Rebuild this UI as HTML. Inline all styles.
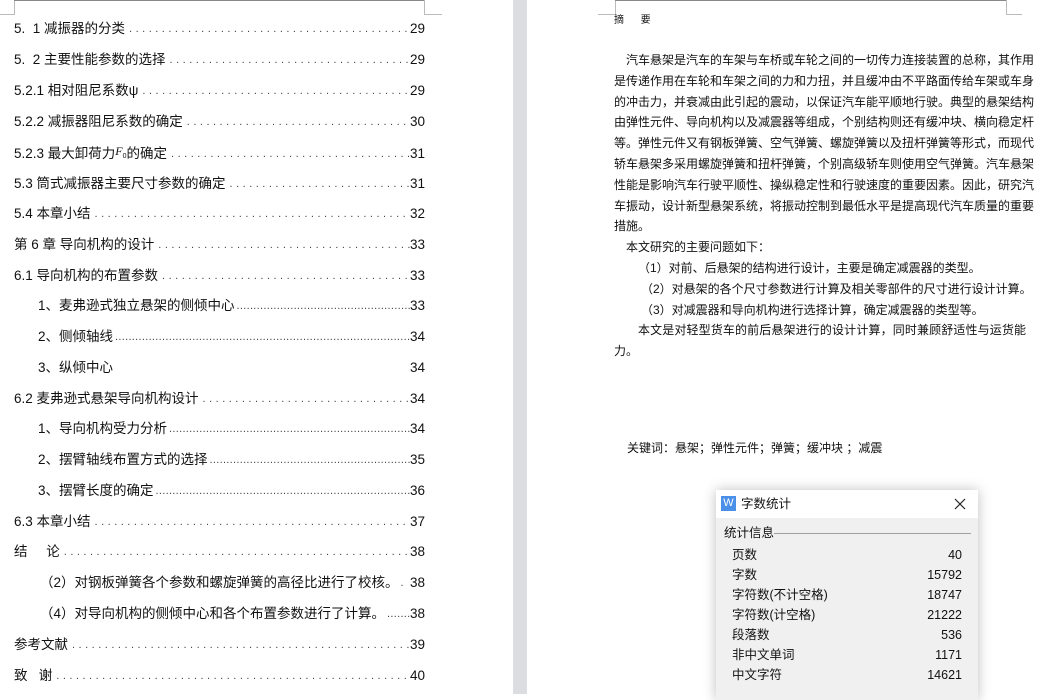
<!DOCTYPE html>
<html><head><meta charset="utf-8"><style>
*{margin:0;padding:0;box-sizing:border-box}
body{width:1042px;height:694px;overflow:hidden;background:#fff;position:relative;font-family:"Liberation Sans","Noto Sans CJK SC",sans-serif;color:#111}
.gap{position:absolute;left:513px;top:0;width:14px;height:694px;background:#dcdde0}
.ln{position:absolute;background:#bbb}
.row{position:absolute;left:14px;width:411px;height:18px;display:flex;font-size:13.5px;line-height:18px;white-space:nowrap}
.row .d{flex:1;overflow:hidden;color:#444;letter-spacing:3.5px;padding:0 4px;font-size:11px}
.row.s{font-size:13.5px}
.row.s .d{letter-spacing:0.3px;padding:0 2px}
.rt{position:absolute;left:614px;width:412px;font-size:12px;line-height:20.8px;font-family:"Liberation Sans","Noto Sans CJK SC",sans-serif}
.rt div{white-space:nowrap}
.rt .j{text-align:justify;text-align-last:justify;text-justify:inter-character}
.dlg{position:absolute;left:716px;top:490px;width:262px;height:210px;background:#f0f0f0;box-shadow:0 0 12px rgba(0,0,0,0.25);font-family:"Liberation Sans","Noto Sans CJK SC",sans-serif;font-size:12.5px}
.dlg .tb{height:28px;background:#fff;position:relative}
.it{position:absolute;left:16px;width:230px;display:flex;justify-content:space-between;height:18px;line-height:18px}
</style></head><body>
<div class="gap"></div>
<div class="ln" style="left:14px;top:0;width:1px;height:15px"></div>
<div class="ln" style="left:0;top:14px;width:15px;height:1px"></div>
<div class="ln" style="left:14px;top:0;width:411px;height:1px;background:#888"></div>
<div class="ln" style="left:424px;top:0;width:1px;height:15px"></div>
<div class="ln" style="left:424px;top:14px;width:18px;height:1px"></div>
<div class="ln" style="left:615px;top:0;width:1px;height:15px"></div>
<div class="ln" style="left:598px;top:14px;width:18px;height:1px"></div>
<div class="ln" style="left:615px;top:0;width:392px;height:1px;background:#888"></div>
<div class="ln" style="left:1006px;top:0;width:1px;height:15px"></div>
<div class="ln" style="left:1006px;top:14px;width:16px;height:1px"></div>

<div class="row" style="top:20px"><span>5.&nbsp;&nbsp;1 减振器的分类</span><span class="d">............................................................</span><span>29</span></div>
<div class="row" style="top:51px"><span>5.&nbsp;&nbsp;2 主要性能参数的选择</span><span class="d">............................................................</span><span>29</span></div>
<div class="row" style="top:82px"><span>5.2.1 相对阻尼系数ψ</span><span class="d">............................................................</span><span>29</span></div>
<div class="row" style="top:113px"><span>5.2.2 减振器阻尼系数的确定</span><span class="d">............................................................</span><span>30</span></div>
<div class="row" style="top:145px"><span>5.2.3 最大卸荷力<i style="font-family:'Liberation Serif',serif;font-size:12px;position:relative;top:-3px">F</i><span style="font-size:7px">0</span>的确定</span><span class="d">............................................................</span><span>31</span></div>
<div class="row" style="top:175px"><span>5.3 筒式减振器主要尺寸参数的确定</span><span class="d">............................................................</span><span>31</span></div>
<div class="row" style="top:205px"><span>5.4 本章小结</span><span class="d">............................................................</span><span>32</span></div>
<div class="row" style="top:236px"><span>第 6 章 导向机构的设计</span><span class="d">............................................................</span><span>33</span></div>
<div class="row" style="top:267px"><span>6.1 导向机构的布置参数</span><span class="d">............................................................</span><span>33</span></div>
<div class="row s" style="top:297px"><span style="padding-left:24px">1、麦弗逊式独立悬架的侧倾中心</span><span class="d">..............................................................................................................</span><span>33</span></div>
<div class="row s" style="top:328px"><span style="padding-left:24px">2、侧倾轴线</span><span class="d">..............................................................................................................................</span><span>34</span></div>
<div class="row s" style="top:359px"><span style="padding-left:24px">3、纵倾中心</span><span class="d" style="color:#fff">.</span><span>34</span></div>
<div class="row" style="top:390px"><span>6.2 麦弗逊式悬架导向机构设计</span><span class="d">............................................................</span><span>34</span></div>
<div class="row s" style="top:420px"><span style="padding-left:24px">1、导向机构受力分析</span><span class="d">..............................................................................................................................</span><span>34</span></div>
<div class="row s" style="top:451px"><span style="padding-left:24px">2、摆臂轴线布置方式的选择</span><span class="d">..............................................................................................................................</span><span>35</span></div>
<div class="row s" style="top:482px"><span style="padding-left:24px">3、摆臂长度的确定</span><span class="d">..............................................................................................................................</span><span>36</span></div>
<div class="row" style="top:513px"><span>6.3 本章小结</span><span class="d">............................................................</span><span>37</span></div>
<div class="row" style="top:543px"><span>结&nbsp;&nbsp;&nbsp;&nbsp;&nbsp;论</span><span class="d">............................................................</span><span>38</span></div>
<div class="row s" style="top:574px"><span style="padding-left:26px">（2）对钢板弹簧各个参数和螺旋弹簧的高径比进行了校核。</span><span class="d">.</span><span>38</span></div>
<div class="row s" style="top:605px"><span style="padding-left:26px">（4）对导向机构的侧倾中心和各个布置参数进行了计算。</span><span class="d">..........</span><span>38</span></div>
<div class="row" style="top:636px"><span>参考文献</span><span class="d">............................................................</span><span>39</span></div>
<div class="row" style="top:667px"><span>致&nbsp;&nbsp;&nbsp;谢</span><span class="d">............................................................</span><span>40</span></div>

<div style="position:absolute;left:614px;top:14px;font-size:10px;line-height:14px">摘&nbsp;&nbsp;&nbsp;&nbsp;&nbsp;&nbsp;要</div>
<div class="rt" style="top:50px">
<div class="j" style="padding-left:12px">汽车悬架是汽车的车架与车桥或车轮之间的一切传力连接装置的总称，其作用</div>
<div class="j">是传递作用在车轮和车架之间的力和力扭，并且缓冲由不平路面传给车架或车身</div>
<div class="j">的冲击力，并衰减由此引起的震动，以保证汽车能平顺地行驶。典型的悬架结构</div>
<div class="j">由弹性元件、导向机构以及减震器等组成，个别结构则还有缓冲块、横向稳定杆</div>
<div class="j">等。弹性元件又有钢板弹簧、空气弹簧、螺旋弹簧以及扭杆弹簧等形式，而现代</div>
<div class="j">轿车悬架多采用螺旋弹簧和扭杆弹簧，个别高级轿车则使用空气弹簧。汽车悬架</div>
<div class="j">性能是影响汽车行驶平顺性、操纵稳定性和行驶速度的重要因素。因此，研究汽</div>
<div class="j">车振动，设计新型悬架系统，将振动控制到最低水平是提高现代汽车质量的重要</div>
<div>措施。</div>
<div style="padding-left:12px">本文研究的主要问题如下：</div>
<div style="padding-left:24px">（1）对前、后悬架的结构进行设计，主要是确定减震器的类型。</div>
<div style="padding-left:27px">（2）对悬架的各个尺寸参数进行计算及相关零部件的尺寸进行设计计算。</div>
<div style="padding-left:27px">（3）对减震器和导向机构进行选择计算，确定减震器的类型等。</div>
<div class="j" style="padding-left:24px">本文是对轻型货车的前后悬架进行的设计计算，同时兼顾舒适性与运货能</div>
<div>力。</div>
</div>
<div class="rt" style="top:438px;left:627px;width:auto">关键词：悬架；弹性元件；弹簧；缓冲块 ；减震</div>

<div class="dlg">
 <div class="tb">
  <div style="position:absolute;left:5px;top:6px;width:15px;height:15px;background:#4a8fe8;color:#fff;font-size:11px;line-height:15px;text-align:center">W</div>
  <div style="position:absolute;left:25px;top:5px;line-height:18px">字数统计</div>
  <svg style="position:absolute;right:12px;top:8px" width="12" height="12" viewBox="0 0 12 12"><path d="M1 1L11 11M11 1L1 11" stroke="#222" stroke-width="1.2"/></svg>
 </div>
 <div style="position:absolute;left:8px;top:34px;line-height:18px">统计信息</div>
 <div style="position:absolute;left:58px;top:43px;width:197px;height:1px;background:#a0a0a0"></div>
 <div class="it" style="top:56px"><span>页数</span><span>40</span></div>
 <div class="it" style="top:76px"><span>字数</span><span>15792</span></div>
 <div class="it" style="top:96px"><span>字符数(不计空格)</span><span>18747</span></div>
 <div class="it" style="top:116px"><span>字符数(计空格)</span><span>21222</span></div>
 <div class="it" style="top:136px"><span>段落数</span><span>536</span></div>
 <div class="it" style="top:156px"><span>非中文单词</span><span>1171</span></div>
 <div class="it" style="top:176px"><span>中文字符</span><span>14621</span></div>
</div>
</body></html>
